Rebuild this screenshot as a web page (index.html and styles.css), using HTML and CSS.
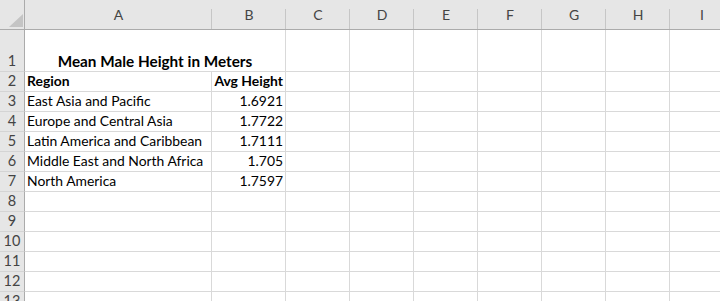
FILE: index.html
```html
<!DOCTYPE html>
<html>
<head>
<meta charset="utf-8">
<link rel="stylesheet" href="styles.css">
</head>
<body>
<div class="sheet">
  <div class="corner"><svg class="tri" width="14" height="13" viewBox="0 0 14 13"><polygon points="0,13 14,13 14,0" fill="#c4c4c4"/></svg></div>
  <div class="ch">A</div><div class="ch">B</div><div class="ch">C</div><div class="ch">D</div><div class="ch">E</div><div class="ch">F</div><div class="ch">G</div><div class="ch">H</div><div class="ch">I</div>

  <div class="rh">1</div><div class="c title">Mean Male Height in Meters</div><div class="c"></div><div class="c"></div><div class="c"></div><div class="c"></div><div class="c"></div><div class="c"></div><div class="c"></div>

  <div class="rh">2</div><div class="c b">Region</div><div class="c b num">Avg Height</div><div class="c"></div><div class="c"></div><div class="c"></div><div class="c"></div><div class="c"></div><div class="c"></div><div class="c"></div>

  <div class="rh">3</div><div class="c">East Asia and Pacific</div><div class="c num">1.6921</div><div class="c"></div><div class="c"></div><div class="c"></div><div class="c"></div><div class="c"></div><div class="c"></div><div class="c"></div>

  <div class="rh">4</div><div class="c">Europe and Central Asia</div><div class="c num">1.7722</div><div class="c"></div><div class="c"></div><div class="c"></div><div class="c"></div><div class="c"></div><div class="c"></div><div class="c"></div>

  <div class="rh">5</div><div class="c">Latin America and Caribbean</div><div class="c num">1.7111</div><div class="c"></div><div class="c"></div><div class="c"></div><div class="c"></div><div class="c"></div><div class="c"></div><div class="c"></div>

  <div class="rh">6</div><div class="c">Middle East and North Africa</div><div class="c num">1.705</div><div class="c"></div><div class="c"></div><div class="c"></div><div class="c"></div><div class="c"></div><div class="c"></div><div class="c"></div>

  <div class="rh">7</div><div class="c">North America</div><div class="c num">1.7597</div><div class="c"></div><div class="c"></div><div class="c"></div><div class="c"></div><div class="c"></div><div class="c"></div><div class="c"></div>

  <div class="rh">8</div><div class="c"></div><div class="c"></div><div class="c"></div><div class="c"></div><div class="c"></div><div class="c"></div><div class="c"></div><div class="c"></div><div class="c"></div>
  <div class="rh">9</div><div class="c"></div><div class="c"></div><div class="c"></div><div class="c"></div><div class="c"></div><div class="c"></div><div class="c"></div><div class="c"></div><div class="c"></div>
  <div class="rh">10</div><div class="c"></div><div class="c"></div><div class="c"></div><div class="c"></div><div class="c"></div><div class="c"></div><div class="c"></div><div class="c"></div><div class="c"></div>
  <div class="rh">11</div><div class="c"></div><div class="c"></div><div class="c"></div><div class="c"></div><div class="c"></div><div class="c"></div><div class="c"></div><div class="c"></div><div class="c"></div>
  <div class="rh">12</div><div class="c"></div><div class="c"></div><div class="c"></div><div class="c"></div><div class="c"></div><div class="c"></div><div class="c"></div><div class="c"></div><div class="c"></div>
  <div class="rh">13</div><div class="c"></div><div class="c"></div><div class="c"></div><div class="c"></div><div class="c"></div><div class="c"></div><div class="c"></div><div class="c"></div><div class="c"></div>
</div>
</body>
</html>
```

FILE: styles.css
```css
html, body {
  margin: 0;
  padding: 0;
  background: #ffffff;
  overflow: hidden;
}

.sheet {
  display: grid;
  grid-template-columns: 25px 187px 74px repeat(7, 64px);
  grid-template-rows: 30px 42px repeat(12, 20px);
  font-family: Lato, "Open Sans", sans-serif;
  font-size: 13.9px;
  color: #000;
  width: 720px;
}

.corner {
  position: relative;
  background: #e6e6e6;
  border-right: 1px solid #ababab;
  border-bottom: 1px solid #ababab;
}

.tri {
  position: absolute;
  left: 9px;
  top: 14px;
}

.ch {
  position: relative;
  background: #e6e6e6;
  border-bottom: 1px solid #ababab;
  display: flex;
  align-items: flex-end;
  justify-content: center;
  padding-bottom: 6px;
  color: #444444;
  font-size: 14px;
}

.ch::after {
  content: "";
  position: absolute;
  right: 0;
  top: 9px;
  bottom: 0;
  width: 1px;
  background: #c6c6c6;
}

.rh {
  background: #e6e6e6;
  border-right: 1px solid #ababab;
  border-bottom: 1px solid #d4d4d4;
  display: flex;
  align-items: flex-end;
  justify-content: center;
  color: #444444;
  font-size: 14.5px;
  line-height: 18px;
  padding-bottom: 1px;
}

.c {
  border-right: 1px solid #d9d9d9;
  border-bottom: 1px solid #d9d9d9;
  display: flex;
  align-items: flex-end;
  padding: 0 2px 1px 2px;
  line-height: 18px;
  white-space: nowrap;
}

.b {
  font-weight: bold;
}

.num {
  justify-content: flex-end;
}

.title {
  grid-column: span 2;
  justify-content: center;
  font-weight: bold;
  font-size: 15.3px;
}
```
